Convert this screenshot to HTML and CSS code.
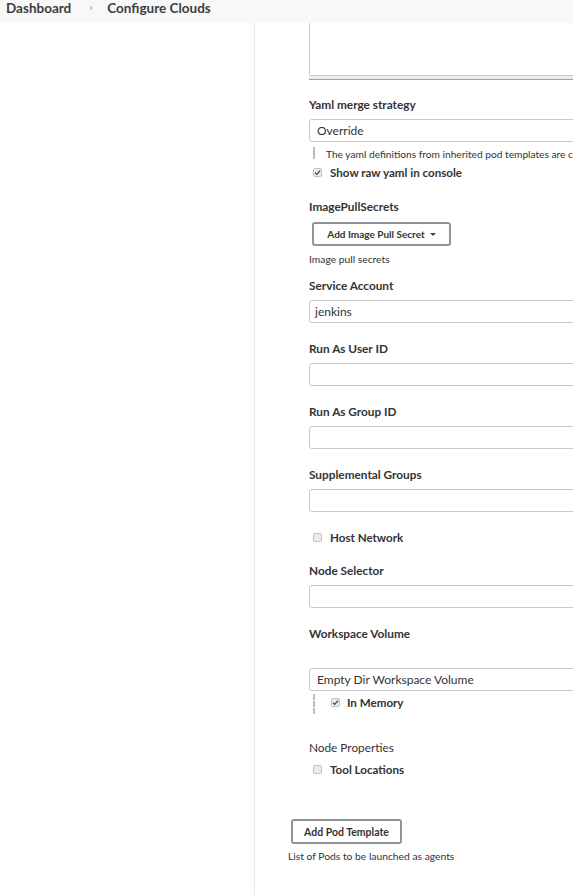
FILE: index.html
```html
<!DOCTYPE html>
<html>
<head>
<meta charset="utf-8">
<title>Configure Clouds</title>
<link rel="stylesheet" href="styles.css">
</head>
<body>
<div class="page">
  <header class="breadcrumbs">
    <span class="crumb">Dashboard</span>
    <span class="crumb-sep"></span>
    <span class="crumb">Configure Clouds</span>
  </header>
  <div class="layout">
    <aside class="side-panel"></aside>
    <main class="main-panel">
      <div class="template">
        <div class="yaml-box">
          <div class="yaml-area"></div>
          <div class="yaml-grip"></div>
        </div>

        <div class="field field-yaml">
          <div class="label">Yaml merge strategy</div>
          <div class="select">Override</div>
          <div class="nested nested-help">
            <div class="help">The yaml definitions from inherited pod templates are co</div>
          </div>
          <label class="check-row check-raw">
            <span class="cbox checked"><svg viewBox="0 0 9 9" width="9" height="9"><path d="M2 4.6 L3.8 6.4 L7 2.6" fill="none" stroke="#444" stroke-width="1.3"/></svg></span>
            <span class="check-label">Show raw yaml in console</span>
          </label>
        </div>

        <div class="field field-secrets">
          <div class="label">ImagePullSecrets</div>
          <button class="btn btn-secret">Add Image Pull Secret <span class="caret"></span></button>
          <div class="desc">Image pull secrets</div>
        </div>

        <div class="field field-sa">
          <div class="label">Service Account</div>
          <div class="input">jenkins</div>
        </div>

        <div class="field">
          <div class="label">Run As User ID</div>
          <div class="input"></div>
        </div>

        <div class="field">
          <div class="label">Run As Group ID</div>
          <div class="input"></div>
        </div>

        <div class="field">
          <div class="label">Supplemental Groups</div>
          <div class="input"></div>
        </div>

        <label class="check-row check-host">
          <span class="cbox"></span>
          <span class="check-label">Host Network</span>
        </label>

        <div class="field field-node">
          <div class="label">Node Selector</div>
          <div class="input"></div>
        </div>

        <div class="field field-ws">
          <div class="label">Workspace Volume</div>
          <div class="select select-ws">Empty Dir Workspace Volume</div>
          <div class="nested nested-mem">
            <label class="check-row check-mem">
              <span class="cbox checked"><svg viewBox="0 0 9 9" width="9" height="9"><path d="M2 4.6 L3.8 6.4 L7 2.6" fill="none" stroke="#444" stroke-width="1.3"/></svg></span>
              <span class="check-label">In Memory</span>
            </label>
          </div>
        </div>

        <div class="plain-label">Node Properties</div>
        <label class="check-row check-tools">
          <span class="cbox"></span>
          <span class="check-label">Tool Locations</span>
        </label>
      </div>

      <button class="btn btn-pod">Add Pod Template</button>
      <div class="desc desc-pods">List of Pods to be launched as agents</div>
    </main>
  </div>
</div>
</body>
</html>
```
FILE: styles.css
```css
html, body {
  margin: 0;
  padding: 0;
  background: #ffffff;
  overflow: hidden;
}

body {
  font-family: Lato, "Open Sans", sans-serif;
  color: #333333;
}

.page {
  width: 573px;
  height: 895px;
  overflow: hidden;
  display: flex;
  flex-direction: column;
}

.breadcrumbs {
  height: 23px;
  flex: none;
  background: #f8f8f8;
  display: flex;
  align-items: flex-start;
  padding-left: 6px;
  box-sizing: border-box;
}

.crumb {
  font-size: 13.5px;
  font-weight: 700;
  line-height: 16px;
  color: #3d3d3d;
}

.crumb-sep {
  width: 0;
  height: 0;
  border-top: 3px solid transparent;
  border-bottom: 3px solid transparent;
  border-left: 3px solid #c8c8c8;
  margin: 5px 14px 0 19px;
}

.layout {
  flex: 1;
  display: flex;
  min-height: 0;
}

.side-panel {
  width: 254px;
  flex: none;
  border-right: 1px solid #e5ebf0;
}

.main-panel {
  flex: none;
  width: 600px;
  padding-left: 33px;
}

.template {
  padding-left: 21px;
}

.yaml-box {
  width: 500px;
}

.yaml-area {
  height: 52px;
  border: 1px solid #c9c9c9;
  border-top: none;
  border-radius: 0 0 2px 2px;
}

.yaml-grip {
  height: 3px;
  background: #e8ecf0;
  border-bottom: 1px solid #9ba3aa;
}

.field {
  margin-top: 17px;
}

.field-yaml {
  margin-top: 16px;
}

.field-secrets {
  margin-top: 18px;
}

.field-sa {
  margin-top: 13px;
}

.label {
  font-size: 11.8px;
  font-weight: 700;
  line-height: 16px;
  height: 15px;
  padding-top: 1px;
  margin-bottom: 7px;
}

.field-secrets .label {
  margin-bottom: 8px;
}

.field-ws .label {
  margin-bottom: 27px;
}

.input,
.select {
  width: 480px;
  height: 23px;
  box-sizing: border-box;
  border: 1px solid #c9c9c9;
  border-radius: 3px;
  font-size: 12px;
  line-height: 21px;
  padding-left: 5px;
  color: #333333;
}

.select {
  padding-left: 7px;
}

.nested {
  margin-left: 4px;
  border-left: 2px dashed #bdbdbd;
}

.nested-help {
  margin-top: 5px;
  height: 12px;
  padding-left: 11px;
  width: 400px;
}

.help {
  font-size: 10.2px;
  line-height: 12px;
  padding-top: 1px;
  white-space: nowrap;
  color: #333333;
}

.check-row {
  display: flex;
  align-items: center;
  height: 16px;
}

.check-row .check-label {
  padding-top: 1px;
}

.check-raw {
  margin-top: 5px;
}

.check-host {
  margin-top: 17px;
}

.check-tools {
  margin-top: 6px;
}

.check-mem {
  margin-top: -1px;
}

.cbox {
  width: 9px;
  height: 9px;
  box-sizing: border-box;
  border: 1px solid #c2c2c2;
  background: #ececec;
  border-radius: 2px;
  margin-left: 4px;
  margin-right: 8px;
  display: flex;
  align-items: center;
  justify-content: center;
  flex: none;
}

.cbox svg {
  display: block;
  flex: none;
}

.check-label {
  font-size: 11.6px;
  font-weight: 700;
  line-height: 15px;
}

.nested-mem {
  margin-top: 4px;
  height: 20px;
  padding-left: 13px;
}

.nested-mem .cbox {
  margin-left: 3px;
  margin-right: 7px;
}

.btn {
  display: block;
  font-family: Lato, "Open Sans", sans-serif;
  font-weight: 700;
  color: #333333;
  background: #ffffff;
  border: 2px solid #8d959b;
  border-radius: 3px;
  box-sizing: border-box;
  padding: 0;
  cursor: pointer;
}

.btn-secret {
  margin-left: 3px;
  width: 139px;
  height: 24px;
  font-size: 10px;
  display: flex;
  align-items: center;
  justify-content: center;
  gap: 5px;
}

.caret {
  width: 0;
  height: 0;
  border-left: 3px solid transparent;
  border-right: 3px solid transparent;
  border-top: 3px solid #444444;
}

.desc {
  font-size: 10.3px;
  line-height: 12px;
  padding-top: 1px;
  height: 11px;
  margin-top: 6px;
}

.plain-label {
  margin-top: 25px;
  font-size: 11.8px;
  line-height: 16px;
  height: 15px;
  padding-top: 1px;
}

.btn-pod {
  margin-top: 42px;
  margin-left: 3px;
  width: 111px;
  height: 25px;
  font-size: 10.5px;
}

.desc-pods {
  margin-top: 5px;
}
```
